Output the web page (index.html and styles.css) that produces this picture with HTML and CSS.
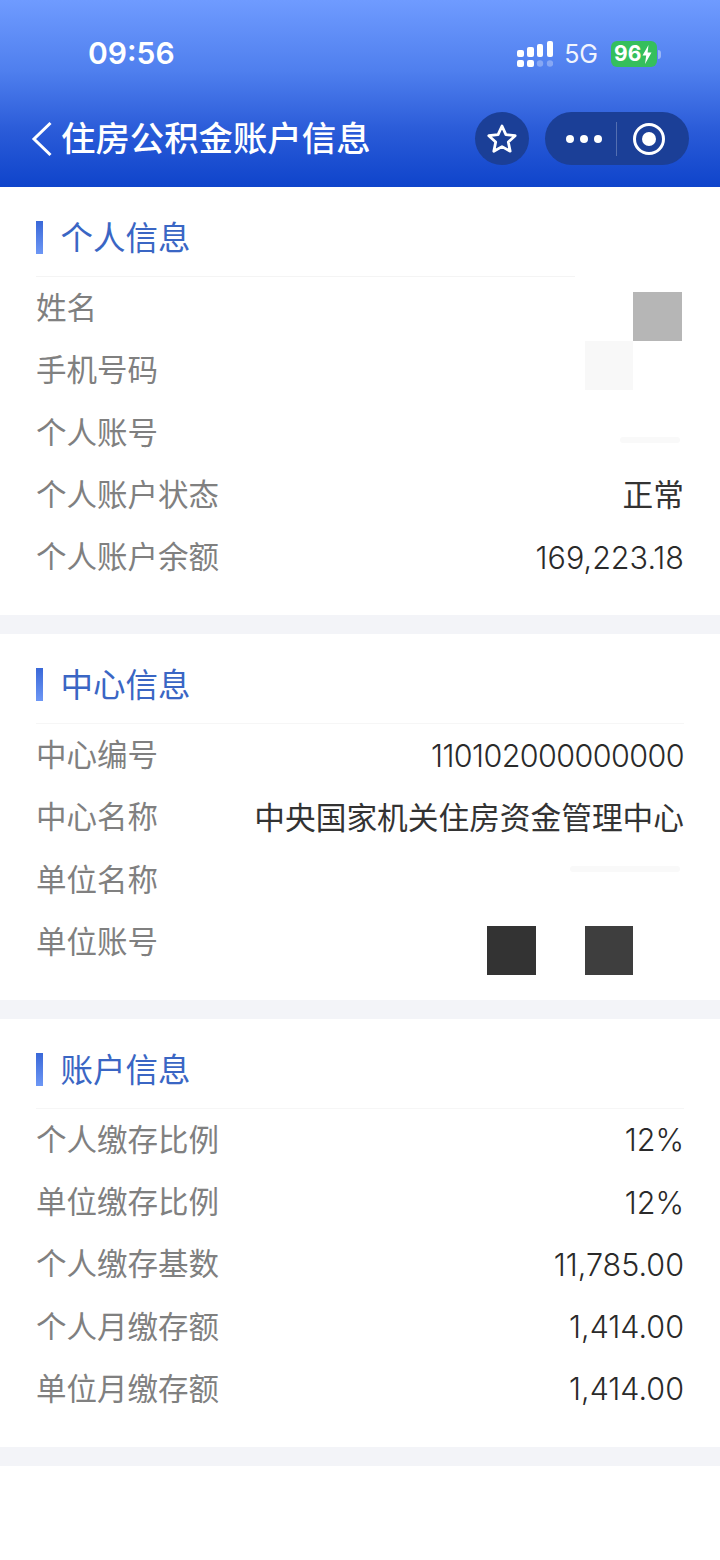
FILE: index.html
```html
<!DOCTYPE html>
<html lang="zh-CN">
<head>
    <meta charset="UTF-8">
    <meta name="viewport" content="width=device-width, initial-scale=1.0">
    <title>住房公积金账户信息</title>
    <link rel="stylesheet" href="styles.css">
</head>
<body>
    <header class="header">
        <div class="status-bar">
            <span class="time">09:56</span>
            <div class="status-right">
                <svg class="signal" width="36" height="26" viewBox="0 0 36 26">
                    <g fill="#fff">
                        <rect x="0" y="9" width="7" height="7" rx="2"/>
                        <rect x="10" y="6" width="7" height="10" rx="2"/>
                        <rect x="20" y="3" width="6" height="13" rx="2"/>
                        <rect x="30" y="0" width="6" height="16" rx="2"/>
                        <rect x="0" y="19" width="7" height="7" rx="2"/>
                        <rect x="10" y="19" width="7" height="7" rx="2"/>
                    </g>
                    <circle cx="23" cy="22.5" r="3.2" fill="#fff" opacity=".3"/>
                    <circle cx="33" cy="22.5" r="3.2" fill="#fff" opacity=".3"/>
                </svg>
                <span class="network">5G</span>
                <div class="battery">
                    <span class="battery-num">96</span>
                    <svg width="10" height="19" viewBox="0 0 10 19"><path d="M6.5 0 0.5 10.5H4.2L3 19 9.5 7.5H5.6Z" fill="#fff"/></svg>
                </div>
                <span class="battery-nub"></span>
            </div>
        </div>
        <div class="nav-bar">
            <svg class="back" width="22" height="36" viewBox="0 0 22 36"><path d="M19.5 2 3 18 19.5 34" fill="none" stroke="#fff" stroke-width="3"/></svg>
            <h1 class="nav-title">住房公积金账户信息</h1>
            <div class="star-btn">
                <svg width="32" height="32" viewBox="0 0 32 32"><path d="M16 3 19.9 11.6 29.2 12.7 22.3 19 24.2 28.2 16 23.6 7.8 28.2 9.7 19 2.8 12.7 12.1 11.6Z" fill="none" stroke="#fff" stroke-width="2.8" stroke-linejoin="round"/></svg>
            </div>
            <div class="capsule">
                <div class="dots"><i></i><i></i><i></i></div>
                <span class="capsule-line"></span>
                <svg width="34" height="34" viewBox="0 0 34 34"><circle cx="17" cy="17" r="14.5" fill="none" stroke="#fff" stroke-width="3"/><circle cx="17" cy="17" r="7" fill="#fff"/></svg>
            </div>
        </div>
    </header>

    <section class="section">
        <h2 class="section-title">个人信息</h2>
        <div class="rows short-line">
            <div class="row"><span class="label">姓名</span><span class="mosaic gray"></span></div>
            <div class="row"><span class="label">手机号码</span><span class="mosaic light"></span></div>
            <div class="row"><span class="label">个人账号</span><span class="smudge smudge-a"></span></div>
            <div class="row"><span class="label">个人账户状态</span><span class="value-cn">正常</span></div>
            <div class="row"><span class="label">个人账户余额</span><span class="value">169,223.18</span></div>
        </div>
    </section>

    <section class="section">
        <h2 class="section-title">中心信息</h2>
        <div class="rows">
            <div class="row"><span class="label">中心编号</span><span class="value tight">110102000000000</span></div>
            <div class="row"><span class="label">中心名称</span><span class="value-cn">中央国家机关住房资金管理中心</span></div>
            <div class="row"><span class="label">单位名称</span><span class="smudge smudge-b"></span></div>
            <div class="row"><span class="label">单位账号</span><span class="mosaic dark-a"></span><span class="mosaic dark-b"></span></div>
        </div>
    </section>

    <section class="section">
        <h2 class="section-title">账户信息</h2>
        <div class="rows">
            <div class="row"><span class="label">个人缴存比例</span><span class="value">12%</span></div>
            <div class="row"><span class="label">单位缴存比例</span><span class="value">12%</span></div>
            <div class="row"><span class="label">个人缴存基数</span><span class="value">11,785.00</span></div>
            <div class="row"><span class="label">个人月缴存额</span><span class="value">1,414.00</span></div>
            <div class="row"><span class="label">单位月缴存额</span><span class="value">1,414.00</span></div>
        </div>
    </section>
    <div class="section-end"></div>
</body>
</html>
```
FILE: styles.css
```css
body {
    margin: 0;
    background-color: #fff;
    font-family: "Noto Sans CJK SC", "Noto Sans", sans-serif;
}

/* top blue area */
.header {
    height: 187px;
    background: linear-gradient(180deg, #6f9bff 0%, #4f7fee 38%, #2a5bd8 70%, #0f44cb 100%);
    color: #fff;
}

.status-bar {
    height: 112px;
    box-sizing: border-box;
    padding: 34px 59px 0 88px;
    display: flex;
    justify-content: space-between;
    align-items: flex-start;
}

.time {
    font-family: Inter, "Noto Sans", sans-serif;
    font-size: 30px;
    font-weight: 600;
    line-height: 38px;
}

.status-right {
    display: flex;
    align-items: center;
    height: 40px;
}

.signal {
    margin-right: 11px;
}

.network {
    font-family: Inter, "Noto Sans", sans-serif;
    font-size: 25px;
    line-height: 30px;
    margin-right: 13px;
    opacity: .92;
}

.battery {
    width: 46px;
    height: 26px;
    box-sizing: border-box;
    padding-left: 3px;
    border-radius: 6px;
    background-color: #35bf5c;
    display: flex;
    align-items: center;
    gap: 1px;
}

.battery-num {
    font-family: Inter, "Noto Sans", sans-serif;
    font-size: 21px;
    font-weight: 700;
    line-height: 26px;
}

.battery-nub {
    width: 3px;
    height: 9px;
    margin-left: 1px;
    border-radius: 0 3px 3px 0;
    background-color: rgba(255, 255, 255, .4);
}

.nav-bar {
    height: 53px;
    padding: 0 31px;
    display: flex;
    align-items: center;
}

.back {
    flex: none;
    margin-right: 8px;
}

.nav-title {
    flex: 1;
    margin: 0 0 4px;
    font-size: 34.4px;
    font-weight: 500;
    line-height: 49px;
    white-space: nowrap;
}

.star-btn {
    width: 54px;
    height: 53px;
    border-radius: 50%;
    background-color: #1b3f97;
    display: flex;
    align-items: center;
    justify-content: center;
    margin-right: 16px;
}

.capsule {
    width: 144px;
    height: 53px;
    box-sizing: border-box;
    padding: 0 23px 0 21px;
    border-radius: 27px;
    background-color: #1b3f97;
    display: flex;
    align-items: center;
    justify-content: space-between;
}

.dots {
    display: flex;
    gap: 6px;
}

.dots i {
    width: 8px;
    height: 8px;
    border-radius: 50%;
    background-color: #fff;
}

.capsule-line {
    width: 1px;
    height: 34px;
    margin-left: -2px;
    background-color: rgba(255, 255, 255, .25);
}

/* info sections */
.section {
    position: relative;
    padding-top: 34px;
    padding-bottom: 26.75px;
    border-bottom: 19px solid #f3f4f8;
}

.section-title {
    margin: 0 36px;
    padding-left: 24.5px;
    height: 33px;
    font-size: 32.5px;
    font-weight: 400;
    line-height: 29px;
    color: #3a66c4;
    position: relative;
}

.section-title::before {
    content: "";
    position: absolute;
    left: 0;
    top: 0;
    width: 7px;
    height: 33px;
    background: linear-gradient(180deg, #3a68d8, #6d97f5);
}

.rows {
    margin: 22px 36px 0;
    border-top: 1px solid #f6f6f6;
}

.short-line {
    border-top-color: transparent;
    background: linear-gradient(90deg, #f4f4f4, #f4f4f4) no-repeat 0 -1px / 539px 1px;
}

.row {
    height: 62.25px;
    box-sizing: border-box;
    padding-bottom: 4px;
    display: flex;
    align-items: center;
    justify-content: space-between;
    font-size: 30.5px;
}

.label {
    color: #808080;
    white-space: nowrap;
}

.value {
    margin-top: 4px;
    font-family: Inter, "Noto Sans", sans-serif;
    font-weight: 300;
    color: #2a2a2a;
    white-space: nowrap;
}

.value-cn {
    font-size: 30.7px;
    color: #333;
    white-space: nowrap;
}

.tight {
    letter-spacing: -.6px;
}

/* blurred out blocks, sit on top of the rows */
.mosaic {
    position: absolute;
    width: 49px;
    height: 49px;
}

.gray {
    right: 38px;
    top: 105px;
    background-color: #b6b6b6;
}

.light {
    right: 87px;
    top: 154px;
    width: 48px;
    background-color: #f8f8f8;
}

.dark-a {
    left: 487px;
    top: 292px;
    background-color: #333;
}

.dark-b {
    left: 585px;
    top: 292px;
    width: 48px;
    background-color: #3e3e3e;
}

.smudge {
    position: absolute;
    height: 6px;
    border-radius: 3px;
    background-color: #f9f9f9;
}

.smudge-a {
    left: 620px;
    width: 60px;
    top: 250px;
}

.smudge-b {
    left: 570px;
    width: 110px;
    top: 232px;
}

.section-end {
    height: 94px;
}
```
